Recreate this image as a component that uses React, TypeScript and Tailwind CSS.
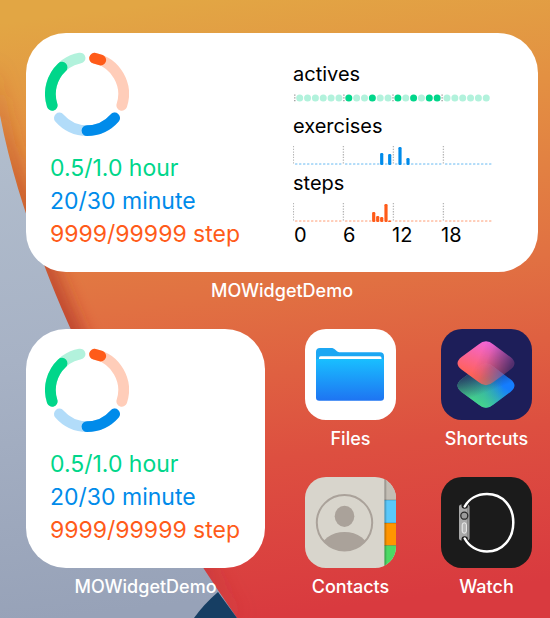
import type { ReactNode } from "react";

const INTER = "font-['Inter','Liberation_Sans',sans-serif]";

function Wallpaper() {
  return (
    <svg
      className="absolute inset-0 -z-10 h-full w-full"
      viewBox="0 0 550 618"
      preserveAspectRatio="none"
      aria-hidden="true"
    >
      <defs>
        <linearGradient id="sunset" x1="180" y1="0" x2="260" y2="618" gradientUnits="userSpaceOnUse">
          <stop offset="0" stopColor="#e2a644" />
          <stop offset="0.2" stopColor="#e39042" />
          <stop offset="0.48" stopColor="#e17142" />
          <stop offset="0.75" stopColor="#dd4f40" />
          <stop offset="1" stopColor="#d93a3f" />
        </linearGradient>
        <linearGradient id="slate" x1="0" y1="100" x2="60" y2="618" gradientUnits="userSpaceOnUse">
          <stop offset="0" stopColor="#b3bfce" />
          <stop offset="0.5" stopColor="#a7b2c5" />
          <stop offset="1" stopColor="#97a2b8" />
        </linearGradient>
        <linearGradient id="shade" x1="0" y1="60" x2="0" y2="600" gradientUnits="userSpaceOnUse">
          <stop offset="0" stopColor="#b5351f" stopOpacity="0" />
          <stop offset="0.25" stopColor="#b5351f" stopOpacity="0.6" />
          <stop offset="0.5" stopColor="#a82a25" stopOpacity="0.75" />
          <stop offset="0.92" stopColor="#a82a35" stopOpacity="0.4" />
          <stop offset="1" stopColor="#a82a35" stopOpacity="0.1" />
        </linearGradient>
        <filter id="edge" x="-20%" y="-20%" width="140%" height="140%">
          <feGaussianBlur stdDeviation="9" />
        </filter>
      </defs>
      <rect width="550" height="618" fill="url(#sunset)" />
      <path
        d="M-8 60C0 140 22 205 46 270C78 354 140 482 237 618"
        fill="none"
        stroke="url(#shade)"
        strokeWidth="18"
        filter="url(#edge)"
      />
      <path d="M-8 60C0 140 22 205 46 270C78 354 140 478 237 618H-8Z" fill="url(#slate)" />
      <path d="M194 618Q204 604 218 592L237 618Z" fill="#163e63" />
    </svg>
  );
}

function ringPoint(deg: number) {
  const a = (deg * Math.PI) / 180;
  return `${(42 + 36.6 * Math.sin(a)).toFixed(2)} ${(42 - 36.6 * Math.cos(a)).toFixed(2)}`;
}

const RING = [
  { from: 12, to: 108, color: "#ffcdb9" },
  { from: 131, to: 229, color: "#b2dcf9" },
  { from: 252, to: 349, color: "#b2f2dc" },
  { from: 12, to: 22, color: "#ff5b19" },
  { from: 131, to: 180, color: "#008bea" },
  { from: 252, to: 317, color: "#00d68a" },
];

function ActivityRing() {
  return (
    <svg className="h-[84px] w-[84px]" viewBox="0 0 84 84" role="img" aria-label="Activity ring">
      {RING.map((arc) => (
        <path
          key={arc.color}
          d={`M${ringPoint(arc.from)}A36.6 36.6 0 0 1 ${ringPoint(arc.to)}`}
          fill="none"
          stroke={arc.color}
          strokeWidth="10.8"
          strokeLinecap="round"
        />
      ))}
    </svg>
  );
}

function Summary() {
  return (
    <div>
      <ActivityRing />
      <div className="mt-4 pl-[5px] text-[23px] leading-[33px] whitespace-nowrap">
        <p className="text-[#00d68a]">0.5/1.0 hour</p>
        <p className="text-[#008bea]">20/30 minute</p>
        <p className="text-[#ff5b19]">9999/99999 step</p>
      </div>
    </div>
  );
}

const ACTIVE_HOURS = [6, 9, 12, 14, 16, 17];

function ActivesChart() {
  return (
    <svg className="mt-2 block h-2 w-[200px]" viewBox="0 0 200 8" role="img" aria-label="Active hours">
      {[0, 1, 2, 3].map((g) => (
        <line key={g} x1={1.8 + g * 49.1} x2={1.8 + g * 49.1} y1="0.5" y2="8" stroke="#8f8f8f" strokeWidth="1.2" strokeDasharray="1.3 1.4" />
      ))}
      {Array.from({ length: 24 }, (_, h) => (
        <circle
          key={h}
          cx={6.7 + Math.floor(h / 6) * 49.1 + (h % 6) * 7.85}
          cy="4"
          r="3.5"
          fill={ACTIVE_HOURS.includes(h) ? "#00d68a" : "#b2f2dc"}
        />
      ))}
    </svg>
  );
}

type Bar = { x: number; h: number };

const EXERCISES: Bar[] = [
  { x: 88.7, h: 12 },
  { x: 96.7, h: 11 },
  { x: 107, h: 18 },
  { x: 115, h: 7 },
];

const STEPS: Bar[] = [
  { x: 80.7, h: 10 },
  { x: 84.7, h: 6 },
  { x: 88.7, h: 5 },
  { x: 93, h: 18 },
  { x: 96.5, h: 1.5 },
];

function BarChart({ bars, color, pale, label }: { bars: Bar[]; color: string; pale: string; label: string }) {
  return (
    <svg className="mt-2 block h-5 w-[200px]" viewBox="0 0 200 20" role="img" aria-label={label}>
      {[0, 1, 2, 3].map((g) => (
        <line key={g} x1={0.4 + g * 50} x2={0.4 + g * 50} y1="0" y2="19" stroke="#b5b5b5" strokeWidth="1.3" strokeDasharray="1.3 1.4" />
      ))}
      {Array.from({ length: 48 }, (_, i) => (
        <rect
          key={i}
          x={2 + Math.floor(i / 12) * 50 + (i % 12) * 4}
          y="17"
          width="2.4"
          height="2"
          rx="0.6"
          fill={pale}
        />
      ))}
      {bars.map((b) => (
        <rect key={b.x} x={b.x - 1.6} y={19 - b.h} width="3.2" height={b.h} rx="1.2" fill={color} />
      ))}
    </svg>
  );
}

function Charts() {
  return (
    <div className="w-[200px] pt-[10px] text-[20px] leading-6 text-black">
      <h3>actives</h3>
      <ActivesChart />
      <h3 className="mt-3">exercises</h3>
      <BarChart bars={EXERCISES} color="#008bea" pale="#b2dcf9" label="Exercise minutes" />
      <h3 className="mt-[5px]">steps</h3>
      <BarChart bars={STEPS} color="#ff5b19" pale="#ffcdb9" label="Steps" />
      <div className="grid grid-cols-[49px_49px_49px_49px] pl-px">
        <span>0</span>
        <span>6</span>
        <span>12</span>
        <span>18</span>
      </div>
    </div>
  );
}

function Caption({ children }: { children: ReactNode }) {
  return (
    <figcaption className="mt-[9px] text-center text-[18px] leading-5 font-medium whitespace-nowrap text-white">
      {children}
    </figcaption>
  );
}

function FilesIcon() {
  return (
    <svg viewBox="0 0 91 91" className="h-full w-full">
      <defs>
        <linearGradient id="folder" x1="0" y1="0" x2="0" y2="1">
          <stop offset="0" stopColor="#19bfff" />
          <stop offset="1" stopColor="#1e74f2" />
        </linearGradient>
      </defs>
      <rect width="91" height="91" fill="#fff" />
      <path d="M11 23a4 4 0 0 1 4-4h11c2 0 3 .6 4.300 1.800l1.700 1.500c1 .8 2 1 3 1H75a4 4 0 0 1 4 4V40H11Z" fill="#1ca7f3" />
      <rect x="14" y="27.300" width="62.500" height="5" rx="1.600" fill="#fff" />
      <path d="M11 32c0-1.500.8-2 2-2H77c1.300 0 2 .6 2 2V68.500a3.200 3.200 0 0 1-3.200 3.200H14.200A3.200 3.200 0 0 1 11 68.500Z" fill="url(#folder)" />
    </svg>
  );
}

const DIAMOND =
  "M37.500 15.500Q45 9 52.500 15.500L69.500 28Q77.500 34.300 69.500 40.600L52.500 53.100Q45 59.600 37.500 53.100L20.500 40.600Q12.500 34.300 20.500 28Z";

function ShortcutsIcon() {
  return (
    <svg viewBox="0 0 91 91" className="h-full w-full">
      <defs>
        <linearGradient id="lower" x1="20" y1="25" x2="70" y2="25" gradientUnits="userSpaceOnUse">
          <stop offset="0" stopColor="#3f6f86" />
          <stop offset="0.45" stopColor="#2f9fb0" />
          <stop offset="0.85" stopColor="#147dff" />
        </linearGradient>
        <linearGradient id="lowerGreen" x1="58" y1="28" x2="40" y2="56" gradientUnits="userSpaceOnUse">
          <stop offset="0.1" stopColor="#45d68c" stopOpacity="0" />
          <stop offset="1" stopColor="#45d68c" />
        </linearGradient>
        <linearGradient id="lowerShade" x1="28" y1="18" x2="38" y2="44" gradientUnits="userSpaceOnUse">
          <stop offset="0.2" stopColor="#20295f" stopOpacity="0.8" />
          <stop offset="1" stopColor="#20295f" stopOpacity="0" />
        </linearGradient>
        <linearGradient id="upper" x1="45" y1="11" x2="32" y2="46" gradientUnits="userSpaceOnUse">
          <stop offset="0" stopColor="#f366dc" />
          <stop offset="1" stopColor="#ff625a" />
        </linearGradient>
        <linearGradient id="fade" x1="38" y1="28" x2="68" y2="42" gradientUnits="userSpaceOnUse">
          <stop offset="0" stopColor="#fff" />
          <stop offset="0.25" stopColor="#fff" stopOpacity="0.9" />
          <stop offset="1" stopColor="#fff" stopOpacity="0.25" />
        </linearGradient>
        <mask id="upperMask">
          <path d={DIAMOND} fill="url(#fade)" />
        </mask>
      </defs>
      <rect width="91" height="91" fill="#1d1e59" />
      <g transform="translate(0 22.300)">
        <path d={DIAMOND} fill="url(#lower)" />
        <path d={DIAMOND} fill="url(#lowerGreen)" />
        <path d={DIAMOND} fill="url(#lowerShade)" />
      </g>
      <rect width="91" height="91" fill="url(#upper)" mask="url(#upperMask)" />
    </svg>
  );
}

function ContactsIcon() {
  return (
    <svg viewBox="0 0 91 91" className="h-full w-full">
      <defs>
        <clipPath id="portrait">
          <circle cx="39.500" cy="45.700" r="28" />
        </clipPath>
        <linearGradient id="pageEdge" x1="0" x2="1">
          <stop offset="0" stopColor="#000" stopOpacity="0.3" />
          <stop offset="1" stopColor="#000" stopOpacity="0" />
        </linearGradient>
      </defs>
      <rect width="91" height="91" fill="#d8d5cc" />
      <rect x="79.500" width="12" height="23" fill="#c3beb5" />
      <rect x="79.500" y="23" width="12" height="23" fill="#5ac8fa" />
      <rect x="79.500" y="46" width="12" height="22.500" fill="#ff9500" />
      <rect x="79.500" y="68.500" width="12" height="23" fill="#4cd964" />
      <path d="M79.500 23H91M79.500 46H91M79.500 68.500H91" stroke="#000" strokeOpacity="0.25" strokeWidth="0.8" />
      <rect x="79.500" width="2.500" height="91" fill="url(#pageEdge)" />
      <g fill="#aaa29a">
        <ellipse cx="39.500" cy="39.300" rx="9.800" ry="10.600" />
        <ellipse cx="39.500" cy="73" rx="24" ry="18" clipPath="url(#portrait)" />
      </g>
      <circle cx="39.500" cy="45.700" r="27.700" fill="none" stroke="#aaa29a" strokeWidth="2" />
    </svg>
  );
}

function WatchIcon() {
  return (
    <svg viewBox="0 0 91 91" className="h-full w-full">
      <rect width="91" height="91" fill="#1b1b1b" />
      <path
        d="M20.500 27.500C18.700 27.500 18 28.500 18 30V61C18 62.500 18.700 63.500 20.500 63.500H26C27.700 63.500 28.500 62.500 28.500 61V30C28.500 28.500 27.700 27.500 26 27.500Z"
        fill="#a9a9a9"
      />
      <path d="M26.800 28V63" stroke="#8a8a8a" strokeWidth="1.500" />
      <circle cx="23.700" cy="28.600" r="3.200" fill="#1b1b1b" />
      <circle cx="23.700" cy="62.400" r="3.200" fill="#1b1b1b" />
      <path
        d="M23.700 29.500C28 21.500 36.500 17 46 17C61.500 17 72.300 29 72.300 45.500C72.300 62 61.500 74.500 46 74.500C36.500 74.500 28 69.500 23.700 61.500"
        fill="none"
        stroke="#fff"
        strokeWidth="2.500"
        strokeLinecap="round"
      />
      <circle cx="23.300" cy="38.700" r="3.500" fill="#9b9b9b" stroke="#2b2b2b" strokeWidth="1.300" />
      <rect x="21.200" y="45.800" width="4.200" height="10.400" rx="2.100" fill="#b5b5b5" stroke="#f4f4f4" strokeWidth="0.900" />
    </svg>
  );
}

const APPS = [
  { name: "Files", icon: <FilesIcon /> },
  { name: "Shortcuts", icon: <ShortcutsIcon /> },
  { name: "Contacts", icon: <ContactsIcon /> },
  { name: "Watch", icon: <WatchIcon /> },
];

export default function App() {
  return (
    <main className={`relative isolate min-h-screen overflow-hidden pt-[33px] pr-3 pb-5 pl-[26px] ${INTER}`}>
      <Wallpaper />
      <figure>
        <div className="flex h-[239px] justify-between rounded-[40px] bg-white pt-[19px] pr-[45px] pl-[19px]">
          <Summary />
          <Charts />
        </div>
        <Caption>MOWidgetDemo</Caption>
      </figure>
      <div className="mt-7 flex">
        <figure>
          <div className="h-[239px] w-[239px] rounded-[40px] bg-white pt-[19px] pl-[19px]">
            <Summary />
          </div>
          <Caption>MOWidgetDemo</Caption>
        </figure>
        <div className="mr-[6px] ml-10 grid flex-1 grid-cols-[91px_91px] content-start justify-between gap-y-7">
          {APPS.map((app) => (
            <figure key={app.name}>
              <button type="button" aria-label={app.name} className="block h-[91px] w-[91px] overflow-hidden rounded-[21px]">
                {app.icon}
              </button>
              <Caption>{app.name}</Caption>
            </figure>
          ))}
        </div>
      </div>
    </main>
  );
}
